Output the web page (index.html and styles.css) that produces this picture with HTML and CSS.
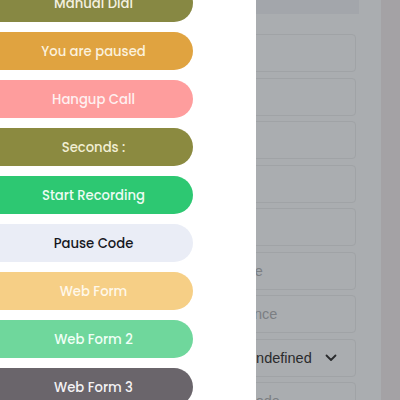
FILE: index.html
```html
<!DOCTYPE html>
<html>
<head>
<meta charset="utf-8">
<link rel="stylesheet" href="styles.css">
</head>
<body>
<div class="page">
  <aside class="sidebar">
    <div class="btn olive">Manual Dial</div>
    <div class="btn orange">You are paused</div>
    <div class="btn pink">Hangup Call</div>
    <div class="btn olive2">Seconds :</div>
    <div class="btn green">Start Recording</div>
    <div class="btn light">Pause Code</div>
    <div class="btn sand">Web Form</div>
    <div class="btn mint">Web Form 2</div>
    <div class="btn dark">Web Form 3</div>
  </aside>
  <main class="main">
    <div class="content">
      <div class="topbar"><span>Form</span></div>
      <div class="fields">
        <div class="field"></div>
        <div class="field"></div>
        <div class="field"></div>
        <div class="field"></div>
        <div class="field"></div>
        <div class="field"><span class="ph">Phone</span></div>
        <div class="field"><span class="ph">Distance</span></div>
        <div class="field select"><span class="val">undefined</span>
          <svg class="chev" width="12" height="8" viewBox="0 0 12 8"><path d="M1.5 1.5 L6 6 L10.5 1.5" fill="none" stroke="#2a2b2d" stroke-width="1.8" stroke-linecap="round" stroke-linejoin="round"/></svg>
        </div>
        <div class="field"><span class="ph">Zip Code</span></div>
      </div>
    </div>
    <div class="scroll"></div>
  </main>
</div>
</body>
</html>
```
FILE: styles.css
```css
html, body {
  margin: 0;
  padding: 0;
  width: 400px;
  height: 400px;
  overflow: hidden;
  background: #aaadb0;
}
.page {
  display: flex;
  width: 400px;
  height: 400px;
}
.sidebar {
  position: relative;
  z-index: 2;
  width: 256px;
  flex: none;
  background: #ffffff;
  display: flex;
  flex-direction: column;
  gap: 10px;
  margin-top: -16px;
  overflow: hidden;
}
.btn {
  margin-left: -6px;
  width: 199px;
  height: 38px;
  flex: none;
  border-radius: 0 19px 19px 0;
  display: flex;
  align-items: center;
  justify-content: center;
  padding-top: 1px;
  box-sizing: border-box;
  font-family: "Poppins", "Inter", "Open Sans", sans-serif;
  font-size: 13.2px;
  font-weight: 500;
  color: #f4f1e0;
}
.olive { background: #878843; }
.orange { background: #e0a340; color: #fbf1dc; }
.pink { background: #fe9d9d; color: #fff0f0; }
.olive2 { background: #8b8a40; color: #f2efd4; }
.green { background: #2dc872; color: #ecfcf2; }
.light { background: #eaedf6; color: #16181e; }
.sand { background: #f6cf86; color: #fff8ea; }
.mint { background: #6fd79c; color: #f0fff6; }
.dark { background: #6a656b; color: #f4f2f4; }

.main {
  flex: 1;
  display: flex;
  min-width: 0;
}
.content {
  flex: 1;
  margin-left: -24px;
  display: flex;
  flex-direction: column;
  min-width: 0;
}
.topbar {
  flex: none;
  height: 14px;
  margin-right: 22px;
  background: #a3a6ab;
  overflow: hidden;
  font-family: "Inter", sans-serif;
  font-size: 13px;
  color: #5b5e63;
  text-align: center;
}
.topbar span {
  display: block;
  margin-top: -13px;
  padding-left: 28px;
}
.fields {
  flex: none;
  margin-top: 20px;
  margin-right: 25px;
  display: flex;
  flex-direction: column;
  gap: 5.5px;
}
.field {
  flex: none;
  height: 36px;
  border: 1px solid #a0a3a6;
  border-radius: 4px;
  display: flex;
  align-items: center;
  padding-left: 10px;
  padding-right: 18px;
  font-family: "Liberation Sans", "Open Sans", sans-serif;
  font-size: 14.5px;
}
.ph { color: #7c7f83; margin-left: -22px; }
.select { justify-content: space-between; }
.val { color: #2a2b2d; margin-left: 5px; }
.chev { margin-top: 1px; }
.scroll {
  width: 19px;
  flex: none;
  background: #a4a2a5;
}
```
